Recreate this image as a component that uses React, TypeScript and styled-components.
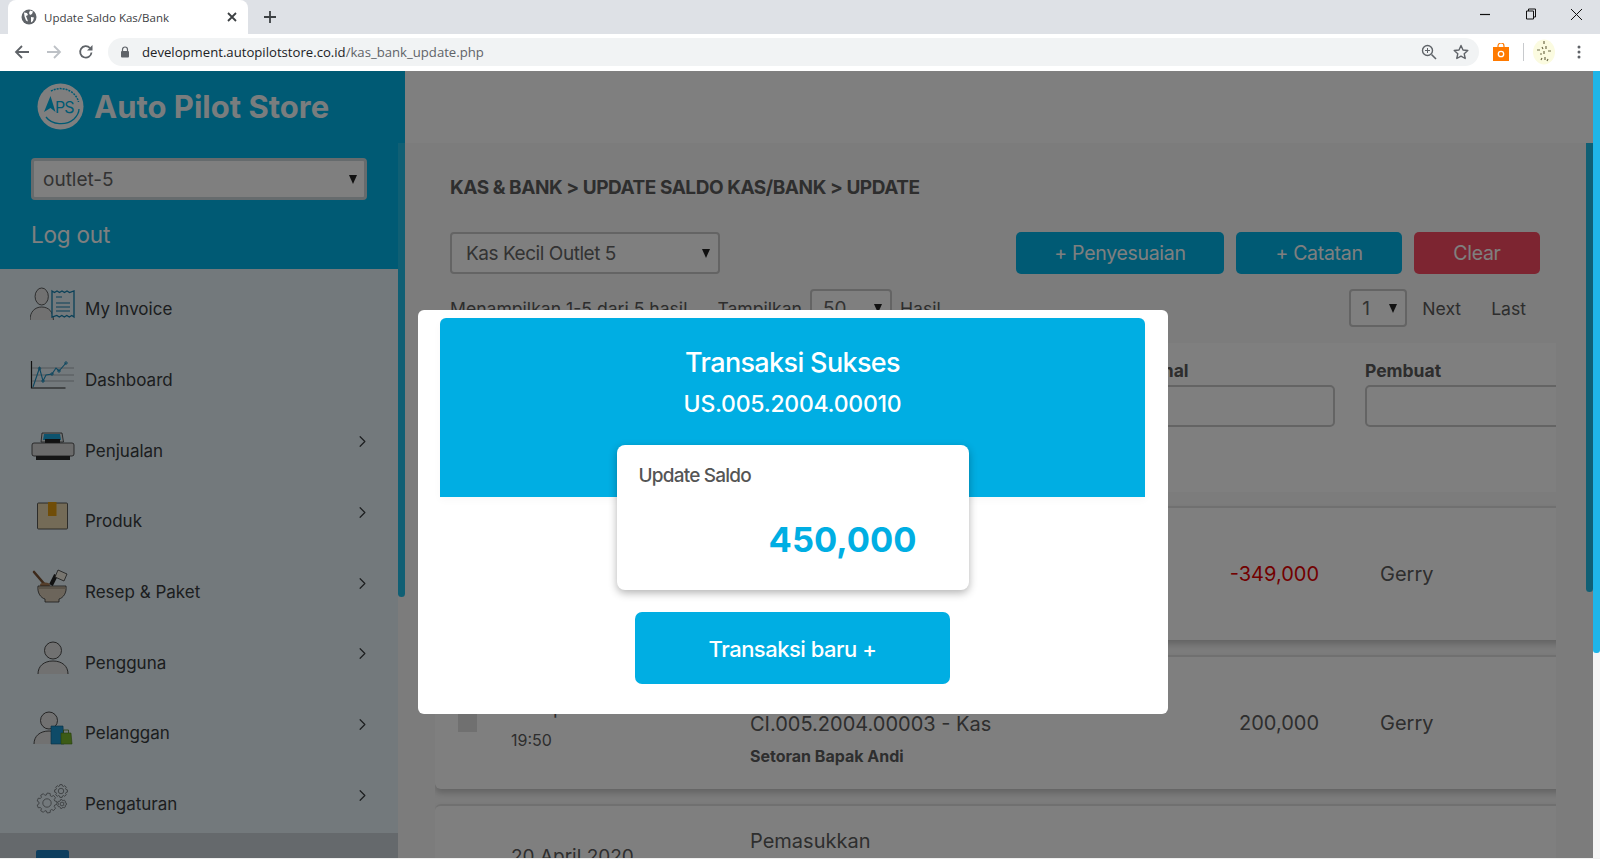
import React from "react";
import styled, { createGlobalStyle } from "styled-components";
import { ChevronRight } from "lucide-react";

const FONT = `Inter, "Noto Sans", sans-serif`;
const CHROME_FONT = `"Open Sans", "Noto Sans", sans-serif`;

const GlobalStyle = createGlobalStyle`
  html, body { margin: 0; padding: 0; background: #f1f1f1; overflow: hidden; }
  * { box-sizing: border-box; }
`;

const Person = ({ x = 0, y = 0 }: { x?: number; y?: number }) => (
  <g transform={`translate(${x} ${y})`} fill="#e2e2e2" stroke="#3a3a3a" strokeWidth="0.9">
    <circle cx="15" cy="9.5" r="8.5" />
    <path d="M0 33c0-8 6-13 15-13s15 5 15 13z" stroke="none" />
    <path d="M0 33c0-8 6-13 15-13s15 5 15 13" fill="none" />
  </g>
);

const InvoiceIcon = () => (
  <svg width="46" height="36" viewBox="0 0 46 36">
    <g transform="scale(.78 1)"><Person x={0} y={1} /></g>
    <path d="M22 5l2.5 1.5L27 5l2.5 1.5L32 5l2.5 1.5L37 5l2.5 1.5L44 5v26l-2.2-1.5-2.5 1.5-2.5-1.5-2.5 1.5-2.5-1.5-2.5 1.5-2.5-1.5L22 31z" fill="#e6f2f8" stroke="#1480b0" strokeWidth="1.3" />
    <path d="M26 11h6M26 17h14M26 21h14M26 25h14" stroke="#1480b0" strokeWidth="1.2" fill="none" />
  </svg>
);
const ChartIcon = () => (
  <svg width="46" height="36" viewBox="0 0 46 36">
    <path d="M1.500 4v27h34" stroke="#222" strokeWidth="1.2" fill="none" />
    <path d="M2 11h42M2 18h42M2 24h42" stroke="#a8b0b4" strokeWidth="1.2" />
    <path d="M3 30L9.500 11 13 24l3-6 6-1 4-6 3 3 7-8" stroke="#1b8fc0" strokeWidth="1.1" fill="none" />
    <g fill="none" stroke="#1b8fc0" strokeWidth="1"><circle cx="9.500" cy="11.500" r="1.200" /><circle cx="13" cy="24" r="1.200" /><circle cx="22" cy="17" r="1.200" /><circle cx="29" cy="14" r="1.200" /><circle cx="36" cy="6" r="1.200" /></g>
  </svg>
);
const RegisterIcon = () => (
  <svg width="46" height="36" viewBox="0 0 46 36">
    <path d="M11 14l1-9h20l1.500 9z" fill="#dfe4e6" stroke="#333" strokeWidth=".8" />
    <path d="M14 6h16l1 6H13z" fill="#1aa6dc" />
    <rect x="15" y="11" width="15" height="4" fill="#222" />
    <rect x="2" y="15" width="42" height="13" rx="2" fill="#d6d6d6" stroke="#333" strokeWidth=".8" />
    <rect x="6" y="28" width="34" height="4" fill="#2a2a2a" />
  </svg>
);
const BoxIcon = () => (
  <svg width="46" height="36" viewBox="0 0 46 36">
    <rect x="7.500" y="5" width="30" height="26" rx="1" fill="#e8d7ae" stroke="#333" strokeWidth=".8" />
    <rect x="18" y="4" width="8.500" height="14" fill="#e09a10" />
  </svg>
);
const MortarIcon = () => (
  <svg width="46" height="36" viewBox="0 0 46 36">
    <path d="M4 3l12 14" stroke="#7a5334" strokeWidth="2.600" strokeLinecap="round" />
    <path d="M21 16l5-10" stroke="#222" strokeWidth="4" />
    <path d="M25 8l3-7 9 4-3 7z" fill="#f1ece0" stroke="#333" strokeWidth=".8" strokeLinejoin="round" />
    <ellipse cx="15" cy="16" rx="5" ry="2.500" fill="#a97b55" />
    <path d="M8 17h28c1 7-3 12-7 13v3H15v-3c-4-1-8-6-7-13z" fill="#d9cbb6" stroke="#333" strokeWidth=".8" />
    <path d="M9 19h26" stroke="#8f816e" strokeWidth="1" />
  </svg>
);
const UserIcon = () => (
  <svg width="46" height="36" viewBox="0 0 46 36">
    <g transform="translate(8 1)"><Person /></g>
  </svg>
);
const CustomerIcon = () => (
  <svg width="46" height="36" viewBox="0 0 46 36">
    <g transform="translate(4 1)"><Person /></g>
    <path d="M21 16h12l1 18H21z" fill="#1d97d0" stroke="#0f5c80" strokeWidth=".6" />
    <path d="M31 23h10l1 11H31z" fill="#79b72a" stroke="#4c7a18" strokeWidth=".6" />
    <path d="M33.500 23v-3h5v3" stroke="#4c7a18" fill="none" strokeWidth=".8" />
  </svg>
);

// gear outline with square teeth, built from its radius
const gearPath = (cx: number, cy: number, r: number, teeth: number) => {
  const step = (Math.PI * 2) / teeth;
  const pts: string[] = [];
  for (let i = 0; i < teeth; i++) {
    const a = i * step;
    [[-0.3, r * 0.8], [-0.18, r], [0.18, r], [0.3, r * 0.8]].forEach(([o, rad]) => {
      const t = a + o * step * 1.2;
      pts.push(`${(cx + Math.cos(t) * rad).toFixed(2)} ${(cy + Math.sin(t) * rad).toFixed(2)}`);
    });
  }
  return `M${pts.join("L")}Z`;
};
const Gear = ({ cx, cy, r, teeth }: { cx: number; cy: number; r: number; teeth: number }) => (
  <g fill="none" stroke="#5a5f62" strokeWidth=".7">
    <path d={gearPath(cx, cy, r, teeth)} />
    <circle cx={cx} cy={cy} r={r * 0.42} />
  </g>
);
const GearsIcon = () => (
  <svg width="46" height="36" viewBox="0 0 46 36">
    <Gear cx={17} cy={22} r={10} teeth={9} />
    <Gear cx={31} cy={10} r={6.500} teeth={8} />
    <Gear cx={32} cy={23} r={4.500} teeth={7} />
  </svg>
);
const TicketIcon = () => (
  <svg width="46" height="36" viewBox="0 0 46 36">
    <rect x="6" y="0" width="33" height="30" rx="2" fill="#1a7cbc" />
  </svg>
);

const Logo = () => (
  <svg width="47" height="47" viewBox="0 0 47 47">
    <circle cx="23.500" cy="23.500" r="23" fill="#fff" />
    <path d="M7 29L13.500 13l5 16-5-4z" fill="#00b4e8" />
    <text x="18" y="29.500" fontFamily={FONT} fontSize="16" fill="#00b4e8" letterSpacing="-1">PS</text>
    <path d="M9 34c6 8 20 9 28 2 3-3 5-6 5-10" fill="none" stroke="#00b4e8" strokeWidth="1.300" />
    <path d="M14 8c7-4 17-3 23 3 2 2 4 5 4.500 8" fill="none" stroke="#00b4e8" strokeWidth="1.500" strokeDasharray="2 1" />
  </svg>
);

const App = () => {
  const menu = [
    { label: "My Invoice", icon: <InvoiceIcon /> },
    { label: "Dashboard", icon: <ChartIcon /> },
    { label: "Penjualan", icon: <RegisterIcon />, more: true },
    { label: "Produk", icon: <BoxIcon />, more: true },
    { label: "Resep & Paket", icon: <MortarIcon />, more: true },
    { label: "Pengguna", icon: <UserIcon />, more: true },
    { label: "Pelanggan", icon: <CustomerIcon />, more: true },
    { label: "Pengaturan", icon: <GearsIcon />, more: true },
    { label: "", icon: <TicketIcon />, active: true },
  ];
  return (
    <Screen>
      <GlobalStyle />
      <TabStrip>
        <Tab>
          <svg width="16" height="16" viewBox="0 0 16 16">
            <circle cx="8" cy="8" r="7.500" fill="#5f6368" />
            <path d="M3 3.500l3 .5 1 2-2 1 1 2.500 1 3-2-1-1.500-4zM9 1.500l3 1-1 2.500-2 1-1-2zM10 8l3 .5-1 3.500-2 1.500z" fill="#fff" />
          </svg>
          <TabTitle>Update Saldo Kas/Bank</TabTitle>
          <TabClose width="10" height="10" viewBox="0 0 10 10">
            <path d="M1 1l8 8M9 1l-8 8" stroke="#3c4043" strokeWidth="1.800" />
          </TabClose>
        </Tab>
        <NewTab width="14" height="14" viewBox="0 0 14 14">
          <path d="M7 1v12M1 7h12" stroke="#3c4043" strokeWidth="1.800" />
        </NewTab>
        <WindowControls>
          <svg width="12" height="12" viewBox="0 0 12 12"><path d="M1 6.500h10" stroke="#111" strokeWidth="1.200" /></svg>
          <svg width="12" height="12" viewBox="0 0 12 12"><path d="M3.500 3V1h7v8H8.500M1.500 3h7v8h-7z" stroke="#111" fill="none" /></svg>
          <svg width="13" height="13" viewBox="0 0 13 13"><path d="M1 1l11 11M12 1L1 12" stroke="#111" /></svg>
        </WindowControls>
      </TabStrip>
      <Toolbar>
        <NavIcons>
          <svg width="16" height="16" viewBox="0 0 16 16"><path d="M15 8H2M8 2L2 8l6 6" fill="none" stroke="#5f6368" strokeWidth="1.800" /></svg>
          <svg width="16" height="16" viewBox="0 0 16 16"><path d="M1 8h13M8 2l6 6-6 6" fill="none" stroke="#bdc1c6" strokeWidth="1.800" /></svg>
          <svg width="16" height="16" viewBox="0 0 16 16"><path d="M13.500 8.500A5.700 5.700 0 1 1 12 4" fill="none" stroke="#5f6368" strokeWidth="1.800" /><path d="M14.500 1v5.500H9z" fill="#5f6368" /></svg>
        </NavIcons>
        <Omnibox>
          <svg width="10" height="12" viewBox="0 0 10 12">
            <path d="M2.500 5V3.500a2.500 2.500 0 0 1 5 0V5" fill="none" stroke="#5f6368" strokeWidth="1.200" />
            <rect x="1" y="5" width="8" height="6.500" rx="1" fill="#5f6368" />
          </svg>
          <Url>development.autopilotstore.co.id<UrlPath>/kas_bank_update.php</UrlPath></Url>
          <OmniIcons>
            <svg width="16" height="16" viewBox="0 0 16 16"><circle cx="6.500" cy="6.500" r="5" fill="none" stroke="#5f6368" strokeWidth="1.400" /><path d="M10.500 10.500L15 15" stroke="#5f6368" strokeWidth="1.600" /><path d="M6.500 4v5M4 6.500h5" stroke="#5f6368" /></svg>
            <svg width="16" height="16" viewBox="0 0 16 16"><path d="M8 1.500l2 4.500 4.800.500-3.600 3.200 1 4.800L8 12.100l-4.200 2.400 1-4.800L1.200 6.500 6 6z" fill="none" stroke="#5f6368" strokeWidth="1.400" strokeLinejoin="round" /></svg>
          </OmniIcons>
        </Omnibox>
        <ExtIcons>
          <svg width="16" height="18" viewBox="0 0 16 18">
            <path d="M5 5V3a3 3 0 0 1 6 0v2" fill="none" stroke="#ff7a00" strokeWidth="1.200" />
            <rect y="4" width="16" height="14" fill="#ff7a00" />
            <circle cx="8" cy="11" r="2.700" fill="none" stroke="#fff" strokeWidth="1.300" />
          </svg>
          <Separator />
          <Avatar width="22" height="26" viewBox="0 0 22 26">
            <ellipse cx="11" cy="13" rx="11" ry="12.500" fill="#fbfbe0" />
            <path d="M11 2v3M9 8l1 2M13 7v3M4 11h3M11 12v3M15 12h3M7 15h2M12 18v3M8 21l1-2M15 20l-1 2" stroke="#6f6c48" strokeWidth="1.200" />
          </Avatar>
          <svg width="4" height="14" viewBox="0 0 4 14"><g fill="#5f6368"><circle cx="2" cy="2" r="1.500" /><circle cx="2" cy="7" r="1.500" /><circle cx="2" cy="12" r="1.500" /></g></svg>
        </ExtIcons>
      </Toolbar>
      <Page>
        <Viewport>
          <Sidebar>
            <SidebarBody>
              <Brand>
                <Logo />
                <BrandName>Auto Pilot Store</BrandName>
              </Brand>
              <OutletField>
                <SelectWrap>
                  <OutletSelect defaultValue="outlet-5"><option>outlet-5</option></OutletSelect>
                </SelectWrap>
              </OutletField>
              <LogOut>Log out</LogOut>
              <Menu>
                {menu.map((item, i) => (
                  <MenuItem key={i} $active={item.active}>
                    {item.icon}
                    <MenuLabel>{item.label}</MenuLabel>
                    {item.more && <MenuChevron size={19} strokeWidth={1.5} />}
                  </MenuItem>
                ))}
              </Menu>
            </SidebarBody>
            <ScrollTrack>
              <ScrollCap />
              <ScrollThumb $height={454} />
            </ScrollTrack>
          </Sidebar>
          <MainColumn>
            <TopBand />
            <MainRow>
              <Main>
                <Breadcrumb>KAS &amp; BANK &gt; UPDATE SALDO KAS/BANK &gt; UPDATE</Breadcrumb>
                <ActionRow>
                  <SelectWrap>
                    <AccountSelect defaultValue="Kas Kecil Outlet 5"><option>Kas Kecil Outlet 5</option></AccountSelect>
                  </SelectWrap>
                  <Actions>
                    <ActionButton $width={208}>+ Penyesuaian</ActionButton>
                    <ActionButton $width={166}>+ Catatan</ActionButton>
                    <ActionButton $width={126} $danger>Clear</ActionButton>
                  </Actions>
                </ActionRow>
                <PagerRow>
                  <PagerText>Menampilkan 1-5 dari 5 hasil</PagerText>
                  <PagerText $left={22}>Tampilkan</PagerText>
                  <SelectWrap>
                    <PagerSelect $width={82} defaultValue="50"><option>50</option></PagerSelect>
                  </SelectWrap>
                  <PagerText>Hasil</PagerText>
                  <PagerSpacer />
                  <SelectWrap>
                    <PagerSelect $width={58} defaultValue="1"><option>1</option></PagerSelect>
                  </SelectWrap>
                  <PagerText $left={7}>Next</PagerText>
                  <PagerText $left={22}>Last</PagerText>
                </PagerRow>
                <FilterPanel>
                  <FilterField>
                    <FilterLabel>Nominal</FilterLabel>
                    <FilterInput />
                  </FilterField>
                  <FilterField>
                    <FilterLabel>Pembuat</FilterLabel>
                    <FilterInput />
                  </FilterField>
                </FilterPanel>
                <TxnList>
                  <TxnRow>
                    <span />
                    <span />
                    <span />
                    <Amount $negative>-349,000</Amount>
                    <Creator>Gerry</Creator>
                  </TxnRow>
                  <TxnRow>
                    <CheckBox />
                    <DateCell>
                      <DateText>20 April 2020</DateText>
                      <TimeText>19:50</TimeText>
                    </DateCell>
                    <DescCell>
                      <DescText>Pemasukkan</DescText>
                      <DescText>CI.005.2004.00003 - Kas</DescText>
                      <NoteText>Setoran Bapak Andi</NoteText>
                    </DescCell>
                    <Amount>200,000</Amount>
                    <Creator>Gerry</Creator>
                  </TxnRow>
                  <TxnRow>
                    <span />
                    <DateCell>
                      <DateText>20 April 2020</DateText>
                    </DateCell>
                    <DescCell>
                      <DescText>Pemasukkan</DescText>
                    </DescCell>
                  </TxnRow>
                </TxnList>
              </Main>
              <ScrollTrack>
                <ScrollThumb $height={449} />
              </ScrollTrack>
            </MainRow>
          </MainColumn>
          <Overlay>
            <Modal>
              <ModalHead>
                <ModalTitle>Transaksi Sukses</ModalTitle>
                <ModalCode>US.005.2004.00010</ModalCode>
              </ModalHead>
              <ResultCard>
                <ResultLabel>Update Saldo</ResultLabel>
                <ResultValue>450,000</ResultValue>
              </ResultCard>
              <NewButton>Transaksi baru +</NewButton>
            </Modal>
          </Overlay>
        </Viewport>
        <OuterTrack>
          <OuterThumb />
        </OuterTrack>
      </Page>
    </Screen>
  );
};

export default App;

const Screen = styled.div`
  width: 1600px;
  height: 858px;
  display: flex;
  flex-direction: column;
  overflow: hidden;
  font-family: ${FONT};
`;

const TabStrip = styled.div`
  height: 34px;
  background: #dee1e6;
  display: flex;
  align-items: flex-end;
  padding-left: 8px;
`;
const Tab = styled.div`
  width: 240px;
  height: 34px;
  background: #fff;
  border-radius: 8px 8px 0 0;
  display: flex;
  align-items: center;
  padding: 0 11px 0 13px;
  gap: 7px;
`;
const TabTitle = styled.span`
  font: 11.500px ${CHROME_FONT};
  color: #3c4043;
  flex: 1;
`;
const TabClose = styled.svg``;
const NewTab = styled.svg`
  margin: 0 0 10px 15px;
`;
const WindowControls = styled.div`
  margin-left: auto;
  width: 121px;
  height: 100%;
  display: flex;
  justify-content: space-between;
  align-items: center;
  padding: 0 17px 6px 0;
`;

const Toolbar = styled.div`
  height: 37px;
  background: #fff;
  display: flex;
  align-items: center;
  padding: 0 0 2px 14px;
`;
const NavIcons = styled.div`
  width: 94px;
  display: flex;
  gap: 16px;
`;
const Omnibox = styled.div`
  width: 1371px;
  height: 28px;
  border-radius: 14px;
  background: #f1f3f4;
  display: flex;
  align-items: center;
  padding: 0 10px 0 12px;
`;
const Url = styled.span`
  margin-left: 12px;
  font: 13.150px ${CHROME_FONT};
  color: #202124;
  flex: 1;
`;
const UrlPath = styled.span`
  color: #5f6368;
`;
const OmniIcons = styled.div`
  display: flex;
  gap: 16px;
  align-items: center;
`;
const ExtIcons = styled.div`
  display: flex;
  align-items: center;
  margin-left: 14px;
`;
const Separator = styled.div`
  width: 1px;
  height: 18px;
  background: #c8cacd;
  margin: 0 9px 0 14px;
`;
const Avatar = styled.svg`
  margin-right: 22px;
`;

const Page = styled.div`
  flex: 1;
  display: flex;
  min-height: 0;
`;
const Viewport = styled.div`
  position: relative;
  flex: 1;
  display: flex;
  min-width: 0;
  background: #fff;
`;
const OuterTrack = styled.div`
  width: 7px;
  background: #f5f5f5;
`;
const OuterThumb = styled.div`
  height: 582px;
  background: #1fb5e8;
  border-radius: 0 0 3px 3px;
`;

const Sidebar = styled.aside`
  width: 405px;
  display: flex;
  flex-shrink: 0;
`;
const SidebarBody = styled.div`
  width: 398px;
  background: #00b4e8;
  display: flex;
  flex-direction: column;
`;
const Brand = styled.div`
  height: 87px;
  display: flex;
  align-items: center;
  padding: 0 0 16px 37px;
  gap: 10px;
`;
const BrandName = styled.div`
  font-size: 31px;
  font-weight: 700;
  color: #fff;
  opacity: 0.95;
  white-space: nowrap;
`;
const OutletField = styled.div`
  padding-left: 31px;
`;
const SelectWrap = styled.div`
  position: relative;
  display: inline-flex;
  &::after {
    content: "";
    position: absolute;
    right: 10px;
    top: 50%;
    margin-top: -4px;
    border-left: 4.500px solid transparent;
    border-right: 4.500px solid transparent;
    border-top: 9px solid #222;
    pointer-events: none;
  }
`;
const BaseSelect = styled.select`
  appearance: none;
  background: #fff;
  border: 2px solid #bbb;
  border-radius: 4px;
  font-family: ${FONT};
  color: #666;
  outline: none;
`;
const OutletSelect = styled(BaseSelect)`
  width: 336px;
  height: 42px;
  border: 3px solid #ccd6da;
  font-size: 19px;
  padding-left: 9px;
`;
const LogOut = styled.div`
  height: 69px;
  display: flex;
  align-items: center;
  padding-left: 31px;
  font-size: 22.500px;
  letter-spacing: -0.2px;
  color: #fff;
`;
const Menu = styled.nav`
  flex: 1;
  background: #e6f2f8;
  overflow: hidden;
`;
const MenuItem = styled.div<{ $active?: boolean }>`
  height: 70.700px;
  margin-top: ${(p) => (p.$active ? "-2px" : "0")};
  display: flex;
  align-items: center;
  padding: 0 26px 0 30px;
  gap: 9px;
  background: ${(p) => (p.$active ? "#cad2d8" : "transparent")};
  svg { flex-shrink: 0; }
`;
const MenuLabel = styled.span`
  flex: 1;
  padding-top: 10px;
  font-size: 17px;
  color: #383c3e;
`;
const MenuChevron = styled(ChevronRight)`
  color: #383c3e;
  margin-bottom: 8px;
`;
const ScrollTrack = styled.div`
  width: 7px;
  background: #f8f8f8;
  flex-shrink: 0;
`;
const ScrollCap = styled.div`
  height: 72px;
  background: #00b4e8;
`;
const ScrollThumb = styled.div<{ $height: number }>`
  height: ${(p) => p.$height}px;
  background: #20bee8;
  border-radius: 0 0 4px 4px;
`;

const MainColumn = styled.div`
  flex: 1;
  min-width: 0;
  display: flex;
  flex-direction: column;
`;
const TopBand = styled.div`
  height: 72px;
  background: #fff;
  flex-shrink: 0;
`;
const MainRow = styled.div`
  flex: 1;
  display: flex;
  min-height: 0;
`;
const Main = styled.main`
  flex: 1;
  min-width: 0;
  background: #f8f8f8;
  padding: 0 30px;
  overflow: hidden;
`;
const Breadcrumb = styled.h1`
  margin: 33px 0 32px 15px;
  font-size: 19px;
  line-height: 24px;
  font-weight: 700;
  letter-spacing: -0.45px;
  color: #5c5c5c;
`;
const ActionRow = styled.div`
  display: flex;
  justify-content: space-between;
  padding: 0 16px 0 15px;
`;
const AccountSelect = styled(BaseSelect)`
  width: 270px;
  height: 42px;
  border: 2px solid #c8c8c8;
  font-size: 19px;
  letter-spacing: -0.45px;
  padding: 1px 0 0 14px;
`;
const Actions = styled.div`
  display: flex;
  gap: 12px;
`;
const ActionButton = styled.button<{ $width: number; $danger?: boolean }>`
  width: ${(p) => p.$width}px;
  height: 42px;
  border: 0;
  border-radius: 5px;
  background: ${(p) => (p.$danger ? "#fb4b62" : "#00b4e8")};
  color: #fff;
  font-family: ${FONT};
  font-size: 19.500px;
  letter-spacing: -0.3px;
`;
const PagerRow = styled.div`
  margin-top: 15px;
  padding: 0 30px 0 15px;
  display: flex;
  align-items: center;
  gap: 8px;
`;
const PagerText = styled.span<{ $left?: number }>`
  margin-left: ${(p) => p.$left ?? 0}px;
  font-size: 17.600px;
  color: #5a5a5a;
`;
const PagerSpacer = styled.div`
  flex: 1;
`;
const PagerSelect = styled(BaseSelect)<{ $width: number }>`
  width: ${(p) => p.$width}px;
  height: 38px;
  border: 2px solid #c8c8c8;
  font-size: 19px;
  padding-left: 11px;
`;
const FilterPanel = styled.section`
  margin-top: 16px;
  height: 149px;
  background: #fff;
  display: grid;
  grid-template-columns: 217px 217px;
  column-gap: 30px;
  padding: 17px 0 0 683px;
  overflow: hidden;
`;
const FilterField = styled.div`
  display: flex;
  flex-direction: column;
  gap: 3px;
`;
const FilterLabel = styled.label`
  font-size: 17.500px;
  line-height: 22px;
  font-weight: 700;
  color: #5a5a5a;
`;
const FilterInput = styled.input`
  height: 42px;
  border: 2px solid #c8c8c8;
  border-radius: 5px;
  background: #fff;
  outline: none;
`;
const TxnList = styled.div`
  overflow: hidden;
  padding: 14px 0 20px;
`;
const TxnRow = styled.article`
  width: 1250px;
  height: 134px;
  background: #fff;
  border-top: 2px solid #e0e0e0;
  border-radius: 6px;
  box-shadow: 0 4px 6px rgba(0, 0, 0, 0.2);
  display: grid;
  grid-template-columns: 53px 239px 400px 169px 1fr;
  padding-left: 23px;
  align-items: start;
  & + & { margin-top: 15px; }
`;
const CheckBox = styled.div`
  width: 19px;
  height: 20px;
  margin-top: 55px;
  background: #e0e0e0;
`;
const DateCell = styled.div`
  padding-top: 38px;
  display: flex;
  flex-direction: column;
  gap: 8px;
`;
const DateText = styled.div`
  font-size: 19px;
  line-height: 26px;
  color: #5c5c5c;
`;
const TimeText = styled.div`
  font-size: 16px;
  line-height: 22px;
  color: #5c5c5c;
`;
const DescCell = styled.div`
  padding-top: 19px;
  display: flex;
  flex-direction: column;
`;
const DescText = styled.div`
  font-size: 20px;
  line-height: 32px;
  color: #5c5c5c;
`;
const NoteText = styled.div`
  margin-top: 2px;
  font-size: 16px;
  line-height: 28px;
  font-weight: 700;
  color: #5c5c5c;
`;
const Amount = styled.div<{ $negative?: boolean }>`
  margin-top: 52px;
  text-align: right;
  font-size: 20px;
  line-height: 28px;
  color: ${(p) => (p.$negative ? "#e50000" : "#5c5c5c")};
`;
const Creator = styled.div`
  margin: 52px 0 0 61px;
  font-size: 20px;
  line-height: 28px;
  color: #5c5c5c;
`;

const Overlay = styled.div`
  position: absolute;
  inset: 0;
  background: rgba(0, 0, 0, 0.5);
  padding: 239px 0 0 418px;
`;
const Modal = styled.div`
  width: 750px;
  height: 404px;
  background: #fff;
  border-radius: 6px;
  padding: 8px 23px 0 22px;
  display: flex;
  flex-direction: column;
  align-items: center;
`;
const ModalHead = styled.div`
  width: 100%;
  height: 179px;
  background: #00aee3;
  border-radius: 6px 6px 0 0;
  box-shadow: 0 3px 8px rgba(0, 0, 0, 0.03);
  color: #fff;
  text-align: center;
  padding-top: 27px;
`;
const ModalTitle = styled.div`
  font-size: 27px;
  line-height: 36px;
  font-weight: 500;
  letter-spacing: -0.65px;
`;
const ModalCode = styled.div`
  margin-top: 8px;
  font-size: 23px;
  line-height: 30px;
  font-weight: 500;
  letter-spacing: -0.25px;
`;
const ResultCard = styled.div`
  position: relative;
  margin-top: -52px;
  width: 352px;
  height: 145px;
  background: #fff;
  border-radius: 8px;
  box-shadow: 0 3px 8px rgba(0, 0, 0, 0.3);
  padding: 18px 52px 0 22px;
`;
const ResultLabel = styled.div`
  font-size: 19px;
  line-height: 26px;
  font-weight: 500;
  letter-spacing: -0.8px;
  color: #555;
`;
const ResultValue = styled.div`
  margin-top: 28px;
  text-align: right;
  font-size: 34.500px;
  line-height: 46px;
  font-weight: 700;
  color: #00aee3;
`;
const NewButton = styled.button`
  margin-top: 22px;
  width: 315px;
  height: 72px;
  border: 0;
  border-radius: 7px;
  padding-top: 3px;
  background: #00aee3;
  color: #fff;
  font-family: ${FONT};
  font-size: 22px;
  font-weight: 500;
  letter-spacing: -0.5px;
`;
